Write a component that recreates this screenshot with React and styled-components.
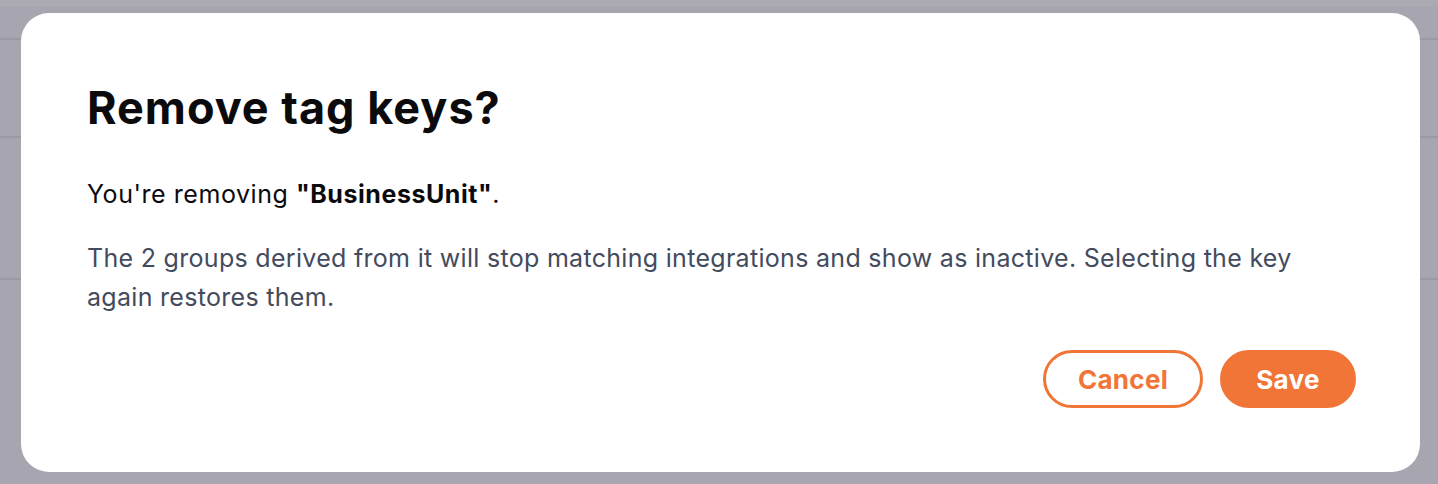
import React from "react";
import styled, { createGlobalStyle } from "styled-components";

const GlobalStyle = createGlobalStyle`
  html, body {
    margin: 0;
    padding: 0;
    background: #a7a6b0;
    font-family: Inter, "Noto Sans", sans-serif;
  }
`;

const Page = styled.div`
  height: 484px;
  overflow: hidden;
  background: #a7a6b0;
`;

const TopBand = styled.div`
  height: 7px;
  background: #abaab3;
`;

const Row = styled.div`
  height: ${(p) => p.h}px;
  border-bottom: 2px solid #9b9aa4;
`;

const Overlay = styled.div`
  position: fixed;
  inset: 0;
  display: flex;
  align-items: flex-start;
  padding: 13px 18px 0 21px;
`;

const Modal = styled.div`
  width: 1399px;
  height: 459px;
  box-sizing: border-box;
  background: #ffffff;
  border-radius: 28px;
  padding: 69px 64px 64px 66px;
  display: flex;
  flex-direction: column;
`;

const Title = styled.h2`
  margin: 0;
  font-size: 45px;
  line-height: 52px;
  font-weight: 700;
  color: #0b0b0d;
  letter-spacing: 1px;
`;

const Lead = styled.p`
  margin: 42px 0 0;
  font-size: 25px;
  line-height: 36px;
  color: #0b0b0d;
  letter-spacing: 0.55px;

  strong {
    font-weight: 700;
  }
`;

const Body = styled.p`
  margin: 27px 0 0;
  font-size: 25px;
  line-height: 39px;
  color: #434b5d;
  letter-spacing: 0.3px;
  max-width: 1250px;
`;

const Actions = styled.div`
  margin-top: auto;
  display: flex;
  justify-content: flex-end;
  gap: 17px;
`;

const Button = styled.button`
  height: 58px;
  width: ${(p) => p.w}px;
  padding: 0;
  box-sizing: border-box;
  border-radius: 29px;
  border: 3px solid #f07537;
  background: ${(p) => (p.primary ? "#f07537" : "#ffffff")};
  color: ${(p) => (p.primary ? "#ffffff" : "#f07537")};
  font-family: Inter, "Noto Sans", sans-serif;
  font-size: 26px;
  font-weight: 700;
  letter-spacing: 0.3px;
  cursor: pointer;
`;

export default function App() {
  return (
    <>
      <GlobalStyle />
      <Page>
        <TopBand />
        <Row h={31} />
        <Row h={96} />
        <Row h={140} />
      </Page>
      <Overlay>
        <Modal>
          <Title>Remove tag keys?</Title>
          <Lead>
            You're removing <strong>"BusinessUnit"</strong>.
          </Lead>
          <Body>
            The 2 groups derived from it will stop matching integrations and show as inactive. Selecting the key again restores them.
          </Body>
          <Actions>
            <Button w={160}>Cancel</Button>
            <Button w={136} primary>
              Save
            </Button>
          </Actions>
        </Modal>
      </Overlay>
    </>
  );
}
